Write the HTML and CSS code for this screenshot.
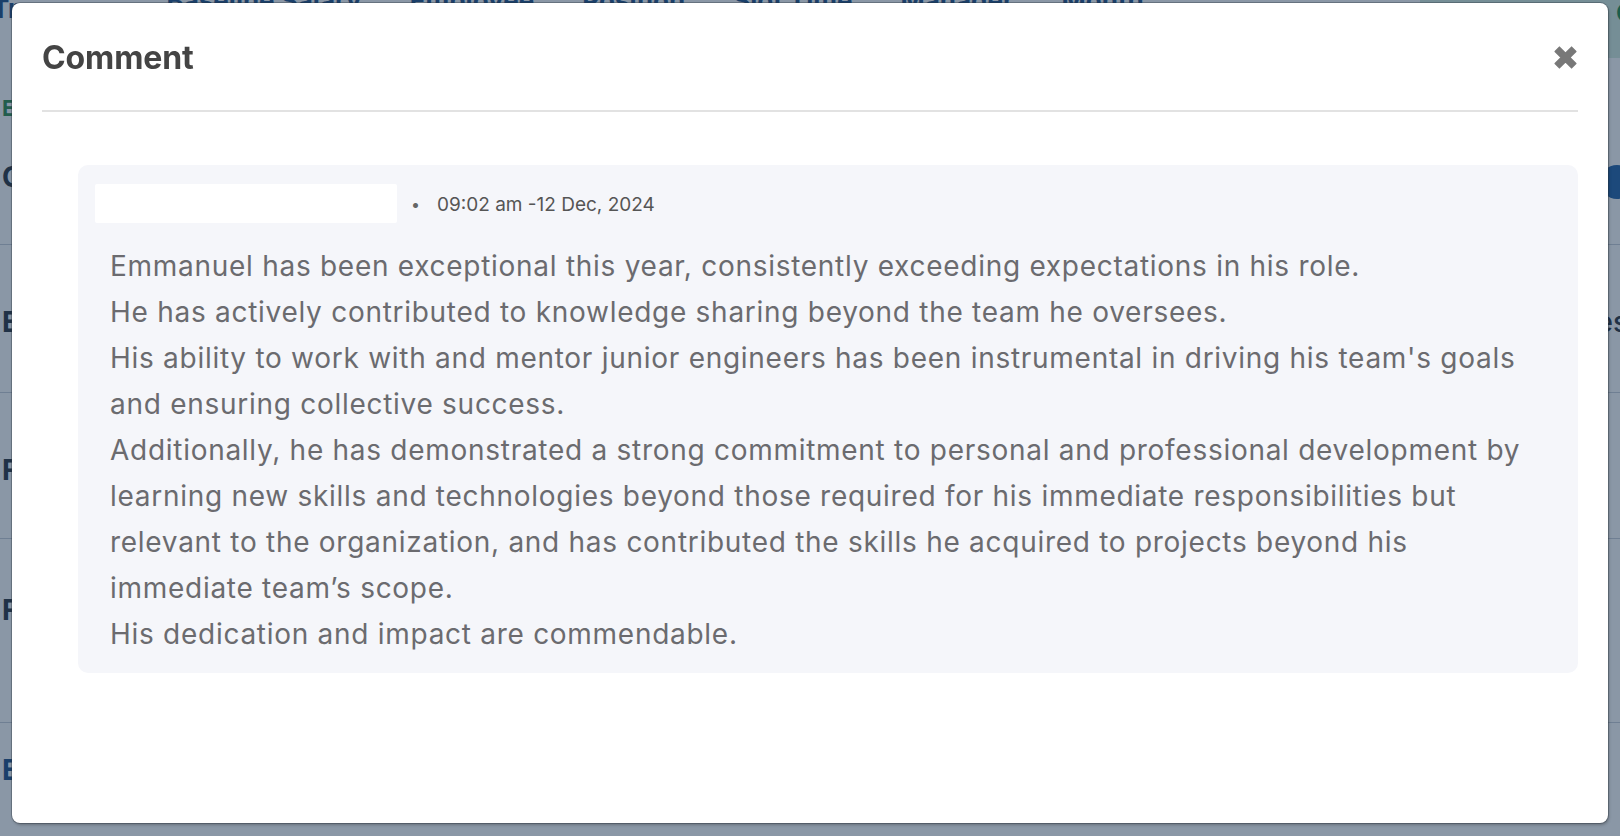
FILE: index.html
```html
<!DOCTYPE html>
<html lang="en">
<head>
<meta charset="utf-8">
<title>Comment</title>
<link rel="stylesheet" href="styles.css">
</head>
<body>
<div class="page">
  <div class="page-head">
    <span class="ph-cell ph-first">Tr</span>
    <span class="ph-cell">Baseline Salary</span>
    <span class="ph-cell">Employee</span>
    <span class="ph-cell">Position</span>
    <span class="ph-cell">Slot Time</span>
    <span class="ph-cell">Manager</span>
    <span class="ph-cell">Month</span>
    <span class="ph-green">Co</span>
  </div>
  <div class="page-row page-row-first">
    <span class="tag">E</span>
    <div class="first-line"><span class="cell">C</span><span class="dot"></span></div>
  </div>
  <div class="page-row row-2"><span class="cell">E</span><span class="cell-r">es</span></div>
  <div class="page-row row-3"><span class="cell">F</span></div>
  <div class="page-row row-4"><span class="cell">F</span></div>
  <div class="page-row row-5"><span class="cell cell-blue">E</span></div>
</div>
<div class="overlay"></div>

<div class="modal" role="dialog" aria-labelledby="modal-title">
  <div class="modal-header">
    <h2 class="modal-title" id="modal-title">Comment</h2>
    <button class="close-btn" aria-label="Close">
      <svg viewBox="0 0 24 24" width="27" height="27"><path d="M2.8 6.6 6.6 2.8 12 8.2 17.4 2.8 21.2 6.6 15.8 12 21.2 17.4 17.4 21.2 12 15.8 6.6 21.2 2.8 17.4 8.2 12Z" fill="#787878" stroke="#787878" stroke-width="1.3" stroke-linejoin="round"/></svg>
    </button>
  </div>
  <div class="modal-body">
    <div class="comment-card">
      <div class="comment-meta">
        <span class="author-box"></span>
        <span class="bullet">•</span>
        <span class="timestamp">09:02 am -12 Dec, 2024</span>
      </div>
      <div class="comment-text">
        <p>Emmanuel has been exceptional this year, consistently exceeding expectations in his role.</p>
        <p>He has actively contributed to knowledge sharing beyond the team he oversees.</p>
        <p>His ability to work with and mentor junior engineers has been instrumental in driving his team's goals<br>and ensuring collective success.</p>
        <p>Additionally, he has demonstrated a strong commitment to personal and professional development by<br>learning new skills and technologies beyond those required for his immediate responsibilities but<br>relevant to the organization, and has contributed the skills he acquired to projects beyond his<br>immediate team’s scope.</p>
        <p>His dedication and impact are commendable.</p>
      </div>
    </div>
  </div>
</div>
</body>
</html>
```

FILE: styles.css
```css
* { box-sizing: border-box; }

html, body {
  margin: 0;
  padding: 0;
  width: 1620px;
  height: 836px;
  overflow: hidden;
  background: #ffffff;
  font-family: "Inter", "Noto Sans", sans-serif;
}

/* background page (covered by the overlay) */
.page {
  width: 1620px;
  height: 836px;
  overflow: hidden;
}
.page-head {
  display: flex;
  align-items: flex-start;
  gap: 48px;
  height: 60px;
  color: #1e4f86;
  font-weight: 700;
  font-size: 26px;
  line-height: 26px;
}
.ph-cell { white-space: nowrap; margin-top: -12px; }
.ph-first { margin-right: 100px; margin-left: -8px; margin-top: -4px; }
.ph-green {
  margin-left: auto;
  width: 200px;
  height: 58px;
  background: #d5ecdf;
  color: #1f8a4c;
  padding-left: 196px;
  overflow: hidden;
}
.page-row {
  display: flex;
  align-items: flex-start;
  justify-content: space-between;
  border-bottom: 1px solid #c8cfd8;
  color: #2b3440;
  font-weight: 700;
  font-size: 28px;
  line-height: 34px;
  padding-left: 2px;
}
.page-row-first {
  flex-direction: column;
  justify-content: flex-start;
  height: 185px;
  padding-top: 37px;
}
.first-line {
  display: flex;
  justify-content: space-between;
  align-items: center;
  width: 100%;
  margin-top: 36px;
}
.row-2 { height: 148px; padding-top: 60px; }
.row-3 { height: 146px; padding-top: 60px; }
.row-4 { height: 184px; padding-top: 54px; }
.row-5 { height: 113px; padding-top: 30px; border-bottom: 0; }
.tag { color: #2f8a4c; font-size: 22px; line-height: 22px; }
.cell-blue { color: #1e4f86; }
.dot {
  width: 34px;
  height: 34px;
  border-radius: 50%;
  background: #2262a8;
  margin-right: -14px;
  margin-top: 10px;
}
.cell-r { margin-right: -8px; font-weight: 500; }

.overlay {
  position: fixed;
  inset: 0;
  background: rgba(22, 48, 78, 0.5);
}

/* modal */
.modal {
  position: fixed;
  left: 12px;
  top: 3px;
  width: 1596px;
  height: 820px;
  background: #ffffff;
  border-radius: 8px;
  box-shadow: 0 0 0 1px rgba(40, 50, 60, 0.35), 1px 2px 3px rgba(0, 0, 0, 0.25);
  display: flex;
  flex-direction: column;
}

.modal-header {
  display: flex;
  align-items: center;
  justify-content: space-between;
  height: 109px;
  margin: 0 30px;
  border-bottom: 2px solid #e2e2e2;
  padding-top: 1px;
}
.modal-title {
  margin: 0;
  font-family: "Inter", "Noto Sans", sans-serif;
  font-size: 32px;
  font-weight: 700;
  color: #444444;
  letter-spacing: -0.1px;
}
.close-btn {
  border: 0;
  background: none;
  padding: 0;
  width: 27px;
  height: 27px;
  display: flex;
  align-items: center;
  justify-content: center;
  cursor: pointer;
  margin-right: -1px;
}

.modal-body {
  padding: 53px 30px 0 66px;
}

.comment-card {
  background: #f5f6fa;
  border-radius: 10px;
  padding: 19px 16px 16px 17px;
}

.comment-meta {
  display: flex;
  align-items: center;
  height: 39px;
}
.author-box {
  width: 302px;
  height: 39px;
  background: #ffffff;
  border-radius: 2px;
}
.bullet {
  margin-left: 14px;
  color: #666;
  font-size: 16px;
  width: 26px;
}
.timestamp {
  font-size: 19px;
  color: #555555;
  padding-top: 2px;
}

.comment-text {
  margin-top: 20px;
  padding-left: 15px;
  color: #6b6b6f;
  font-size: 28px;
  line-height: 46px;
  letter-spacing: 0.72px;
}
.comment-text p {
  margin: 0;
  white-space: nowrap;
}
```
